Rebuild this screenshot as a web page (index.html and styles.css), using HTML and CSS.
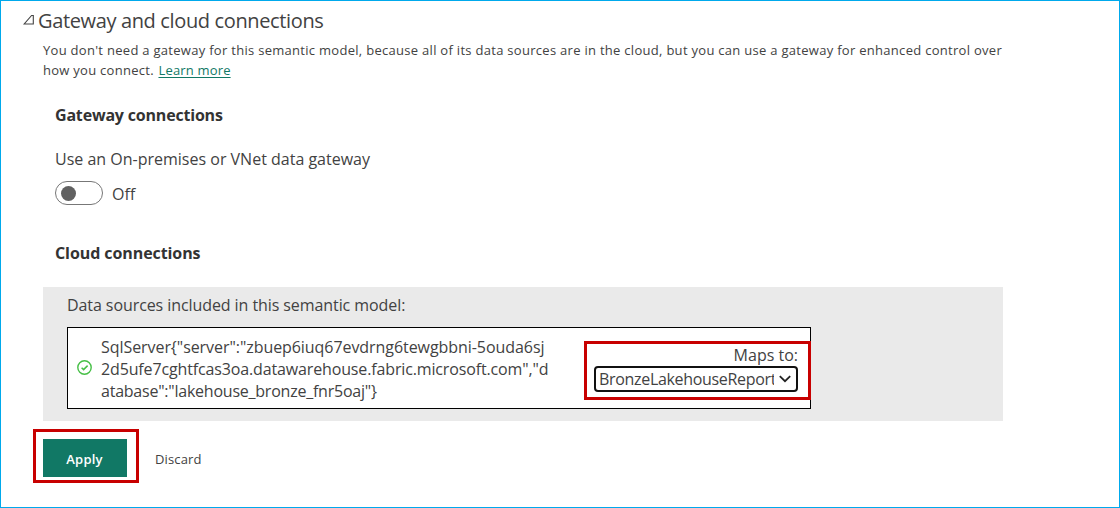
FILE: index.html
```html
<!DOCTYPE html>
<html lang="en">
<head>
<meta charset="utf-8">
<title>Gateway and cloud connections</title>
<link rel="stylesheet" href="styles.css">
</head>
<body>
<main class="page">
  <header class="section-header">
    <svg class="expander" width="12" height="12" viewBox="0 0 12 12"><path d="M10.3 1.5V10H1.2L8.6 1.5Z" fill="none" stroke="#444" stroke-width="1.1"/></svg>
    <h1 class="title">Gateway and cloud connections</h1>
  </header>
  <p class="description"><span class="line-one">You don't need a gateway for this semantic model, because all of its data sources are in the cloud, but you can use a gateway for enhanced control over</span><br><span class="line-two">how you connect. <a class="link" href="#">Learn more</a></span></p>
  <section class="gateway">
    <h2 class="subtitle gateway-title">Gateway connections</h2>
    <p class="label">Use an On-premises or VNet data gateway</p>
    <div class="toggle-row">
      <span class="toggle"><span class="knob"></span></span>
      <span class="toggle-text">Off</span>
    </div>
  </section>
  <h2 class="subtitle cloud-title">Cloud connections</h2>
  <section class="sources">
    <p class="sources-label">Data sources included in this semantic model:</p>
    <div class="source">
      <svg class="check" width="16" height="16" viewBox="0 0 16 16" fill="none" stroke="#46bf46"><circle cx="7.5" cy="7.5" r="6.7" stroke-width="1.4"/><path d="M4.6 7.7L6.6 9.6L10.6 5.6" stroke-width="1.5"/></svg>
      <div class="source-name"><span class="name-one">SqlServer{"server":"zbuep6iuq67evdrng6tewgbbni-5ouda6sj</span><br><span class="name-two">2d5ufe7cghtfcas3oa.datawarehouse.fabric.microsoft.com","d</span><br><span class="name-three">atabase":"lakehouse_bronze_fnr5oaj"}</span></div>
      <div class="mapping">
        <span class="mapping-label">Maps to:</span>
        <div class="select">
          <span class="select-value">BronzeLakehouseReport</span>
          <svg class="chevron" width="12" height="8" viewBox="0 0 12 8"><path d="M0.8 1.2L6 6.2L11.2 1.2" fill="none" stroke="#222" stroke-width="1.8"/></svg>
        </div>
      </div>
    </div>
  </section>
  <footer class="actions">
    <div class="apply-frame"><button class="apply">Apply</button></div>
    <button class="discard">Discard</button>
  </footer>
</main>
</body>
</html>
```
FILE: styles.css
```css
* { box-sizing: border-box; }
body { margin: 0; background: #fff; color: #424242; font-family: "Open Sans", "Noto Sans", sans-serif; }
h1, h2, p { margin: 0; font-weight: 400; }
button { border: 0; padding: 0; font-family: inherit; }
.page { width: 1120px; height: 508px; border: 1px solid #00a9ec; overflow: hidden; white-space: nowrap; }
.section-header { display: flex; align-items: flex-start; height: 39px; padding: 5px 0 0 22px; }
.expander { width: 12px; height: 12px; margin: 8px 3px 0 0; }
.title { font-size: 20px; line-height: 30px; letter-spacing: -0.36px; }
.description { height: 40px; padding-left: 42px; font-size: 13px; line-height: 20px; }
.line-one { letter-spacing: 0.29px; }
.line-two { letter-spacing: 0.27px; }
.link { color: #117865; text-decoration: underline; text-underline-offset: 2px; margin-left: 1px; letter-spacing: 0.17px; }
.gateway { padding: 23px 0 0 54px; }
.subtitle { font-size: 16px; line-height: 24px; font-weight: 700; letter-spacing: -0.19px; color: #333; }
.label { margin-top: 20px; font-size: 16px; line-height: 24px; letter-spacing: 0; }
.toggle-row { display: flex; align-items: center; height: 24px; margin-top: 10px; gap: 9px; }
.toggle { display: flex; align-items: center; width: 48px; height: 24px; padding-left: 5px; border: 1px solid #777; border-radius: 12px; }
.knob { width: 15px; height: 15px; border-radius: 50%; background: #616161; }
.toggle-text { font-size: 16px; line-height: 24px; padding-top: 2px; letter-spacing: 0; }
.cloud-title { margin: 36px 0 0 54px; letter-spacing: -0.08px; }
.sources { width: 960px; height: 134px; margin: 22px 0 0 42px; padding: 6px 24px 0; background: #eaeaea; }
.sources-label { font-size: 16px; line-height: 24px; letter-spacing: -0.08px; }
.source { display: flex; align-items: flex-start; width: 744px; height: 82px; margin-top: 10px; border: 1px solid #000; background: #fff; }
.check { flex: none; width: 16px; height: 16px; margin: 32px 8px 0 9px; }
.source-name { flex: none; width: 483px; padding-top: 8px; font-size: 16px; line-height: 22px; }
.name-one { letter-spacing: -0.06px; }
.name-two { letter-spacing: -0.14px; }
.name-three { letter-spacing: -0.23px; }
.mapping { flex: none; display: flex; flex-direction: column; align-items: flex-end; width: 227px; height: 59px; margin-top: 13px; padding: 1px 10px 0 0; border: 3px solid #c80000; font-size: 16px; }
.mapping-label { line-height: 21px; letter-spacing: 0; }
.select { display: flex; align-items: center; justify-content: space-between; width: 204px; height: 26px; padding: 0 5px 0 3px; border: 2px solid #111; border-radius: 4px; }
.select-value { width: 175px; overflow: hidden; line-height: 22px; letter-spacing: -0.32px; }
.chevron { flex: none; }
.actions { display: flex; align-items: center; margin: 8px 0 0 32px; gap: 16px; }
.apply-frame { width: 106px; height: 54px; padding: 7px; border: 3px solid #c80000; }
.apply { display: block; width: 84px; height: 38px; padding: 2px 1px 0 0; background: #117865; color: #fff; font-size: 13px; font-weight: 600; letter-spacing: 0.2px; }
.discard { padding-top: 6px; background: none; color: #424242; font-size: 13px; letter-spacing: 0.15px; }
```
